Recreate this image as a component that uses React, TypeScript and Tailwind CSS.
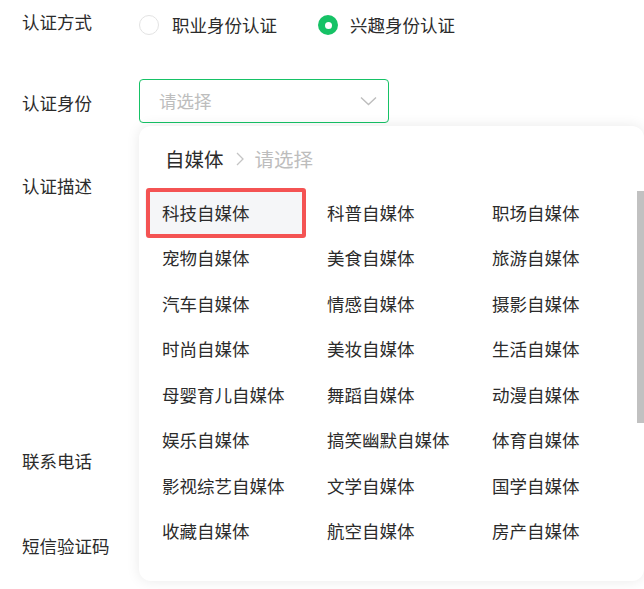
import React from "react";

const items = [
  "科技自媒体", "科普自媒体", "职场自媒体",
  "宠物自媒体", "美食自媒体", "旅游自媒体",
  "汽车自媒体", "情感自媒体", "摄影自媒体",
  "时尚自媒体", "美妆自媒体", "生活自媒体",
  "母婴育儿自媒体", "舞蹈自媒体", "动漫自媒体",
  "娱乐自媒体", "搞笑幽默自媒体", "体育自媒体",
  "影视综艺自媒体", "文学自媒体", "国学自媒体",
  "收藏自媒体", "航空自媒体", "房产自媒体",
];

const font = { fontFamily: '"Noto Sans CJK SC", "Noto Sans", sans-serif' };

export default function App() {
  return (
    <div
      className="relative w-[644px] h-[589px] overflow-hidden bg-white text-[#2b2b2b] text-[17.5px] leading-[24px]"
      style={font}
    >
      <div className="flex flex-col pl-[22px]">
        {/* Row 1 */}
        <div className="mt-[4px] h-[42px] flex items-center">
          <div className="w-[117px] pb-[6px]">认证方式</div>
          <div className="flex items-center">
            <span className="w-[20px] h-[20px] rounded-full border border-[#e3e3e3] bg-white" />
            <span className="ml-[13px]">职业身份认证</span>
            <span className="ml-[41px] w-[20px] h-[20px] rounded-full bg-[#16c266] flex items-center justify-center">
              <span className="w-[7px] h-[7px] rounded-full bg-white" />
            </span>
            <span className="ml-[12px]">兴趣身份认证</span>
          </div>
        </div>
        {/* Row 2 */}
        <div className="mt-[33px] h-[44px] flex items-center">
          <div className="w-[117px] pt-[4px]">认证身份</div>
          <div className="w-[250px] h-[44px] rounded-[4px] border border-[#16c266] flex items-center justify-between pl-[19px] pr-[11px]">
            <span className="text-[#bdbdbd]">请选择</span>
            <svg width="17" height="10" viewBox="0 0 17 10" fill="none">
              <path d="M1 1.5 L8.5 8.5 L16 1.5" stroke="#bdbdbd" strokeWidth="1.4" />
            </svg>
          </div>
        </div>
        {/* Row 3 */}
        <div className="mt-[42px] h-[250px] flex items-start">
          <div className="w-[117px] pt-[9px]">认证描述</div>
          <div className="w-[250px] h-[250px] rounded-[4px] border border-[#e5e5e5]" />
        </div>
        {/* Row 4 */}
        <div className="mt-[24px] h-[44px] flex items-center">
          <div className="w-[117px]">联系电话</div>
          <div className="w-[250px] h-[44px] rounded-[4px] border border-[#e5e5e5]" />
        </div>
        {/* Row 5 */}
        <div className="mt-[41px] h-[44px] flex items-center">
          <div className="w-[117px]">短信验证码</div>
          <div className="w-[250px] h-[44px] rounded-[4px] border border-[#e5e5e5]" />
        </div>
      </div>

      {/* Dropdown panel */}
      <div className="absolute left-[139px] top-[126px] w-[505px] h-[455px] rounded-[12px] bg-white shadow-[0_0_14px_rgba(0,0,0,0.09)]">
        <div className="pt-[20px] pl-[26px] flex items-center h-[46px] text-[19.5px] leading-[26px]">
          <span className="text-[#2b2b2b]">自媒体</span>
          <svg className="ml-[12px]" width="8" height="14" viewBox="0 0 8 14" fill="none">
            <path d="M1 1 L7 7 L1 13" stroke="#c4c4c4" strokeWidth="1.3" />
          </svg>
          <span className="ml-[11px] text-[#bdbdbd]">请选择</span>
        </div>
        <div className="mt-[18px] pl-[6px] grid grid-cols-[165px_165px_165px] auto-rows-[45.5px]">
          {items.map((t, i) => (
            <div key={t} className="relative flex items-center">
              <div
                className={
                  i === 0
                    ? "w-[160px] h-[46px] flex items-center pl-[17px] bg-[#f5f6f8] rounded-[2px]"
                    : "w-[160px] h-[46px] flex items-center pl-[17px]"
                }
              >
                <span className="whitespace-nowrap">{t}</span>
              </div>
              {i === 0 && (
                <div className="absolute left-[1px] top-[-2px] w-[160px] h-[50px] border-[4px] border-[#f45353] rounded-[3px]" />
              )}
            </div>
          ))}
        </div>
        <div className="absolute right-0 top-[65px] w-[7px] h-[232px] bg-[#c1c1c1]" />
      </div>
    </div>
  );
}
